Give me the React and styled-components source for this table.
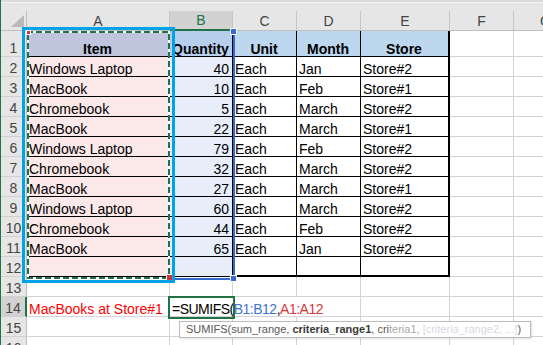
import React from "react";
import styled, { createGlobalStyle } from "styled-components";

const GlobalStyle = createGlobalStyle`
  html, body {
    margin: 0;
    padding: 0;
    background: #fff;
    overflow: hidden;
  }
`;

const GRID = "#d4d4d4";
const GREEN = "#217346";

const Page = styled.div`
  position: relative;
  width: 543px;
  height: 345px;
  overflow: hidden;
  display: flex;
  background: #fff;
  font-family: "Liberation Sans", Arial, sans-serif;
`;

const LeftEdge = styled.div`
  width: 1px;
  flex: none;
  background: ${GREEN};
`;

const Sheet = styled.div`
  flex: 1;
  display: flex;
  flex-direction: column;
`;

const TopStrip = styled.div`
  flex: none;
  height: 11px;
  box-sizing: border-box;
  background: #e6e6e6;
  border-top: 2px solid #dadada;
  box-shadow: inset 0 1px 0 #f4f4f4;
`;

const Grid = styled.div`
  flex: none;
  display: grid;
  grid-template-columns: 26px 143px 63px 64px 64px 89px 64px 64px;
  grid-template-rows: 20px 26px repeat(15, 20px);
`;

const Corner = styled.div`
  box-sizing: border-box;
  background: #e6e6e6;
  border-right: 1px solid #bfbfbf;
  border-bottom: 1px solid #bfbfbf;
  display: flex;
  align-items: flex-end;
  justify-content: flex-end;
  padding: 0 2px 3px 0;

  svg {
    display: block;
  }
`;

const ColHead = styled.div`
  box-sizing: border-box;
  display: flex;
  align-items: center;
  justify-content: center;
  font-size: 14px;
  background: ${(p) => (p.$active ? "#d2d2d2" : "#e6e6e6")};
  color: ${(p) => (p.$active ? GREEN : "#444")};
  border-right: 1px solid #c6c6c6;
  border-bottom: ${(p) => (p.$active ? `2px solid ${GREEN}` : "1px solid #bfbfbf")};
`;

const RowHead = styled.div`
  box-sizing: border-box;
  display: flex;
  align-items: flex-end;
  justify-content: center;
  font-size: 14px;
  line-height: 14px;
  padding-bottom: 1px;
  background: ${(p) => (p.$active ? "#d2d2d2" : "#e6e6e6")};
  color: #444;
  border-right: ${(p) => (p.$active ? `2px solid ${GREEN}` : "1px solid #bfbfbf")};
  border-bottom: 1px solid #d0d0d0;
`;

const Cell = styled.div`
  box-sizing: border-box;
  display: flex;
  align-items: flex-end;
  justify-content: ${(p) =>
    p.$align === "right" ? "flex-end" : p.$align === "center" ? "center" : "flex-start"};
  padding: 0 3px 0 2px;
  font-size: 14px;
  line-height: 14px;
  white-space: nowrap;
  overflow: ${(p) => (p.$spill ? "visible" : "hidden")};
  background: ${(p) => p.$fill || "transparent"};
  color: ${(p) => p.$color || "#000"};
  font-weight: ${(p) => (p.$bold ? 700 : 400)};
  border-right: ${(p) => p.$rw ?? 1}px solid ${(p) => p.$rc || GRID};
  border-bottom: ${(p) => p.$bw ?? 1}px solid ${(p) => p.$bc || GRID};
`;

const Formula = styled.span`
  letter-spacing: -0.5px;
`;

const Ref = styled.span`
  color: ${(p) => p.$color};
`;

/* overlays: selection marks, the annotation box and the tooltip */

const AnnotationBox = styled.div`
  position: absolute;
  left: 22px;
  top: 27px;
  width: 153px;
  height: 256px;
  box-sizing: border-box;
  border: 3px solid #00a2e8;
  pointer-events: none;
`;

const Ants = styled.div`
  position: absolute;
  left: 27px;
  top: 31px;
  width: 143px;
  height: 248px;
  background:
    linear-gradient(90deg, ${GREEN} 6px, #fff 6px) top left / 9px 2px repeat-x,
    linear-gradient(90deg, ${GREEN} 6px, #fff 6px) bottom left / 9px 2px repeat-x,
    linear-gradient(0deg, ${GREEN} 6px, #fff 6px) top left / 2px 9px repeat-y,
    linear-gradient(0deg, ${GREEN} 6px, #fff 6px) top right / 2px 9px repeat-y;
`;

const RangeBox = styled.div`
  position: absolute;
  left: 170px;
  top: 31px;
  width: 65px;
  height: 249px;
  box-sizing: border-box;
  border-right: 2px solid #3768cd;
  border-bottom: 2px solid #3768cd;
`;

const Handle = styled.div`
  position: absolute;
  left: ${(p) => p.$x}px;
  top: ${(p) => p.$y}px;
  width: ${(p) => p.$s}px;
  height: ${(p) => p.$s}px;
  background: ${(p) => p.$color};
  box-shadow: 0 0 0 1px #fff;
`;

const ActiveCell = styled.div`
  position: absolute;
  left: 168px;
  top: 296px;
  width: 67px;
  height: 23px;
  box-sizing: border-box;
  border: 2px solid ${GREEN};
`;

const Tooltip = styled.div`
  position: absolute;
  left: 179px;
  top: 321px;
  width: 352px;
  height: 17px;
  box-sizing: border-box;
  padding-left: 6px;
  background: #fff;
  border: 1px solid #bcbcbc;
  box-shadow: 1px 1px 2px rgba(0, 0, 0, 0.12);
  font-size: 11px;
  line-height: 15px;
  color: #575757;
  white-space: nowrap;
  overflow: hidden;

  b {
    color: #3a3a3a;
  }
`;

const Faint = styled.span`
  color: ${(p) => p.$tone};
`;

const COLS = ["A", "B", "C", "D", "E", "F", "G"];

const data = [
  ["Windows Laptop", 40, "Each", "Jan", "Store#2"],
  ["MacBook", 10, "Each", "Feb", "Store#1"],
  ["Chromebook", 5, "Each", "March", "Store#2"],
  ["MacBook", 22, "Each", "March", "Store#1"],
  ["Windows Laptop", 79, "Each", "Feb", "Store#2"],
  ["Chromebook", 32, "Each", "March", "Store#2"],
  ["MacBook", 27, "Each", "March", "Store#1"],
  ["Windows Laptop", 60, "Each", "March", "Store#2"],
  ["Chromebook", 44, "Each", "Feb", "Store#2"],
  ["MacBook", 65, "Each", "Jan", "Store#2"],
  ["", "", "", "", ""],
];

function tableRow(values, rowNo) {
  const last = rowNo === 12;
  return [
    <Cell key="a" $fill="#fbe9ea" $rc="#000" $bc="#000">
      {values[0]}
    </Cell>,
    <Cell key="b" $fill="#e7eef9" $align="right" $rc="#000" $bc="#000">
      {values[1]}
    </Cell>,
    <Cell key="c" $rc="#000" $bc="#000" $bw={last ? 2 : 1}>
      {values[2]}
    </Cell>,
    <Cell key="d" $rc="#000" $bc="#000" $bw={last ? 2 : 1}>
      {values[3]}
    </Cell>,
    <Cell key="e" $rc="#000" $rw={2} $bc="#000" $bw={last ? 2 : 1}>
      {values[4]}
    </Cell>,
    <Cell key="f" />,
    <Cell key="g" />,
  ];
}

function blankRow() {
  return COLS.map((c) => <Cell key={c} />);
}

export default function App() {
  const rows = [];

  rows.push(
    <React.Fragment key="r1">
      <RowHead>1</RowHead>
      <Cell $fill="#bec5dc" $align="center" $bold $rc="#000" $bc="#000">
        Item
      </Cell>
      <Cell $fill="#b7cfec" $align="center" $bold $rc="#000" $bc="#000">
        Quantity
      </Cell>
      <Cell $fill="#bdd7ee" $align="center" $bold $rc="#000" $bc="#000">
        Unit
      </Cell>
      <Cell $fill="#bdd7ee" $align="center" $bold $rc="#000" $bc="#000">
        Month
      </Cell>
      <Cell $fill="#bdd7ee" $align="center" $bold $rc="#000" $rw={2} $bc="#000">
        Store
      </Cell>
      <Cell />
      <Cell />
    </React.Fragment>
  );

  data.forEach((values, i) => {
    const n = i + 2;
    rows.push(
      <React.Fragment key={`r${n}`}>
        <RowHead>{n}</RowHead>
        {tableRow(values, n)}
      </React.Fragment>
    );
  });

  rows.push(
    <React.Fragment key="r13">
      <RowHead>13</RowHead>
      {blankRow()}
    </React.Fragment>
  );

  rows.push(
    <React.Fragment key="r14">
      <RowHead $active>14</RowHead>
      <Cell $color="#ff0000">MacBooks at Store#1</Cell>
      <Cell $spill $rc="transparent">
        <Formula>
          =SUMIFS(<Ref $color="#3f74d2">B1:B12</Ref>,<Ref $color="#d6383a">A1:A12</Ref>
        </Formula>
      </Cell>
      <Cell $rc="transparent" />
      <Cell />
      <Cell />
      <Cell />
      <Cell />
    </React.Fragment>
  );

  [15, 16].forEach((n) =>
    rows.push(
      <React.Fragment key={`r${n}`}>
        <RowHead>{n}</RowHead>
        {blankRow()}
      </React.Fragment>
    )
  );

  return (
    <>
      <GlobalStyle />
      <Page>
        <LeftEdge />
        <Sheet>
          <TopStrip />
          <Grid>
            <Corner>
              <svg width="13" height="12" viewBox="0 0 13 12">
                <polygon points="13,0 13,12 0,12" fill="#b9b9b9" />
              </svg>
            </Corner>
            {COLS.map((c) => (
              <ColHead key={c} $active={c === "B"}>
                {c}
              </ColHead>
            ))}
            {rows}
          </Grid>
        </Sheet>

        <Ants />
        <RangeBox />
        <Handle $x={27} $y={31} $s={3} $color="#d13438" />
        <Handle $x={167} $y={275} $s={5} $color="#d13438" />
        <Handle $x={231} $y={29} $s={5} $color="#3768cd" />
        <Handle $x={231} $y={276} $s={5} $color="#3768cd" />
        <AnnotationBox />
        <ActiveCell />
        <Tooltip>
          SUMIFS(sum_range, <b>criteria_range1</b>, cri
          <Faint $tone="#a8a8a8">teria1, </Faint>
          <Faint $tone="#d8d8e4">[criteria_range2, ...]</Faint>)
        </Tooltip>
      </Page>
    </>
  );
}
